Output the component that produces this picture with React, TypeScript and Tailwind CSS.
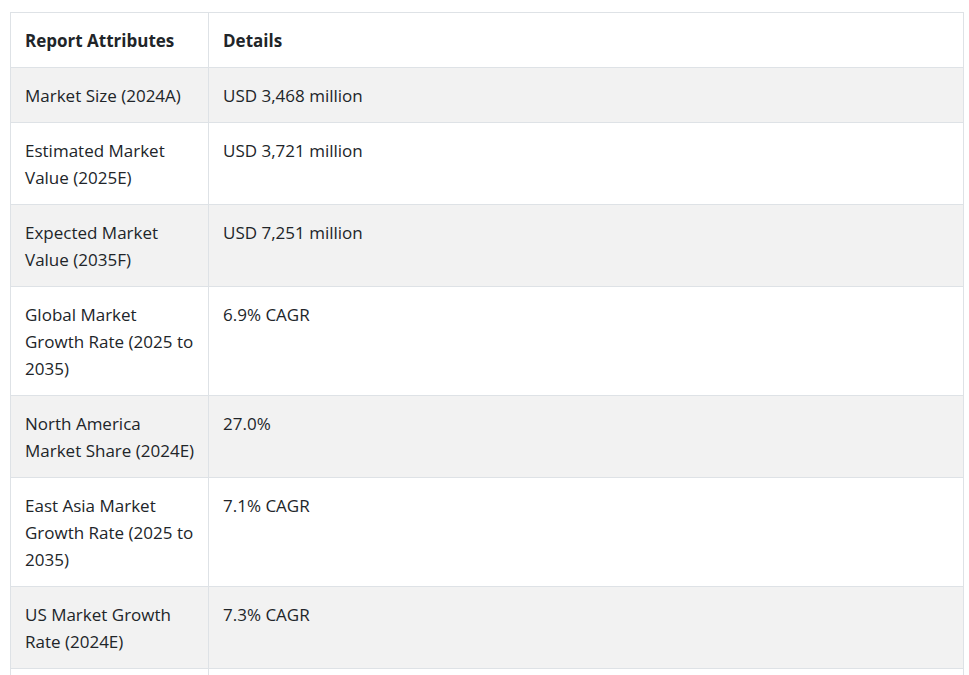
const ROWS: [string, string][] = [
  ["Market Size (2024A)", "USD 3,468 million"],
  ["Estimated Market Value (2025E)", "USD 3,721 million"],
  ["Expected Market Value (2035F)", "USD 7,251 million"],
  ["Global Market Growth Rate (2025 to 2035)", "6.9% CAGR"],
  ["North America Market Share (2024E)", "27.0%"],
  ["East Asia Market Growth Rate (2025 to 2035)", "7.1% CAGR"],
  ["US Market Growth Rate (2024E)", "7.3% CAGR"],
  ["\u00a0", "\u00a0"],
];

export default function App() {
  return (
    <div
      className="min-h-screen bg-white pl-[10px] pr-[5px] pt-[12px] text-[#212529]"
      style={{ fontFamily: '"Open Sans", "Noto Sans", sans-serif' }}
    >
      <table className="w-[954px] table-fixed border-collapse text-[17px] leading-[27px]">
        <colgroup>
          <col className="w-[198px]" />
          <col />
        </colgroup>
        <thead>
          <tr className="bg-white">
            <th className="border border-[#dee2e6] pl-[14px] pr-[8px] pt-[14px] pb-[13px] text-left font-bold">
              Report Attributes
            </th>
            <th className="border border-[#dee2e6] px-[14px] pt-[14px] pb-[13px] text-left font-bold">
              Details
            </th>
          </tr>
        </thead>
        <tbody>
          {ROWS.map(([label, value], i) => (
            <tr key={i} className={i % 2 === 0 ? "bg-[#f2f2f2]" : "bg-white"}>
              <td className="border border-[#dee2e6] pl-[14px] pr-[8px] pt-[14px] pb-[13px] align-top">
                {label}
              </td>
              <td className="border border-[#dee2e6] px-[14px] pt-[14px] pb-[13px] align-top">
                {value}
              </td>
            </tr>
          ))}
        </tbody>
      </table>
    </div>
  );
}
